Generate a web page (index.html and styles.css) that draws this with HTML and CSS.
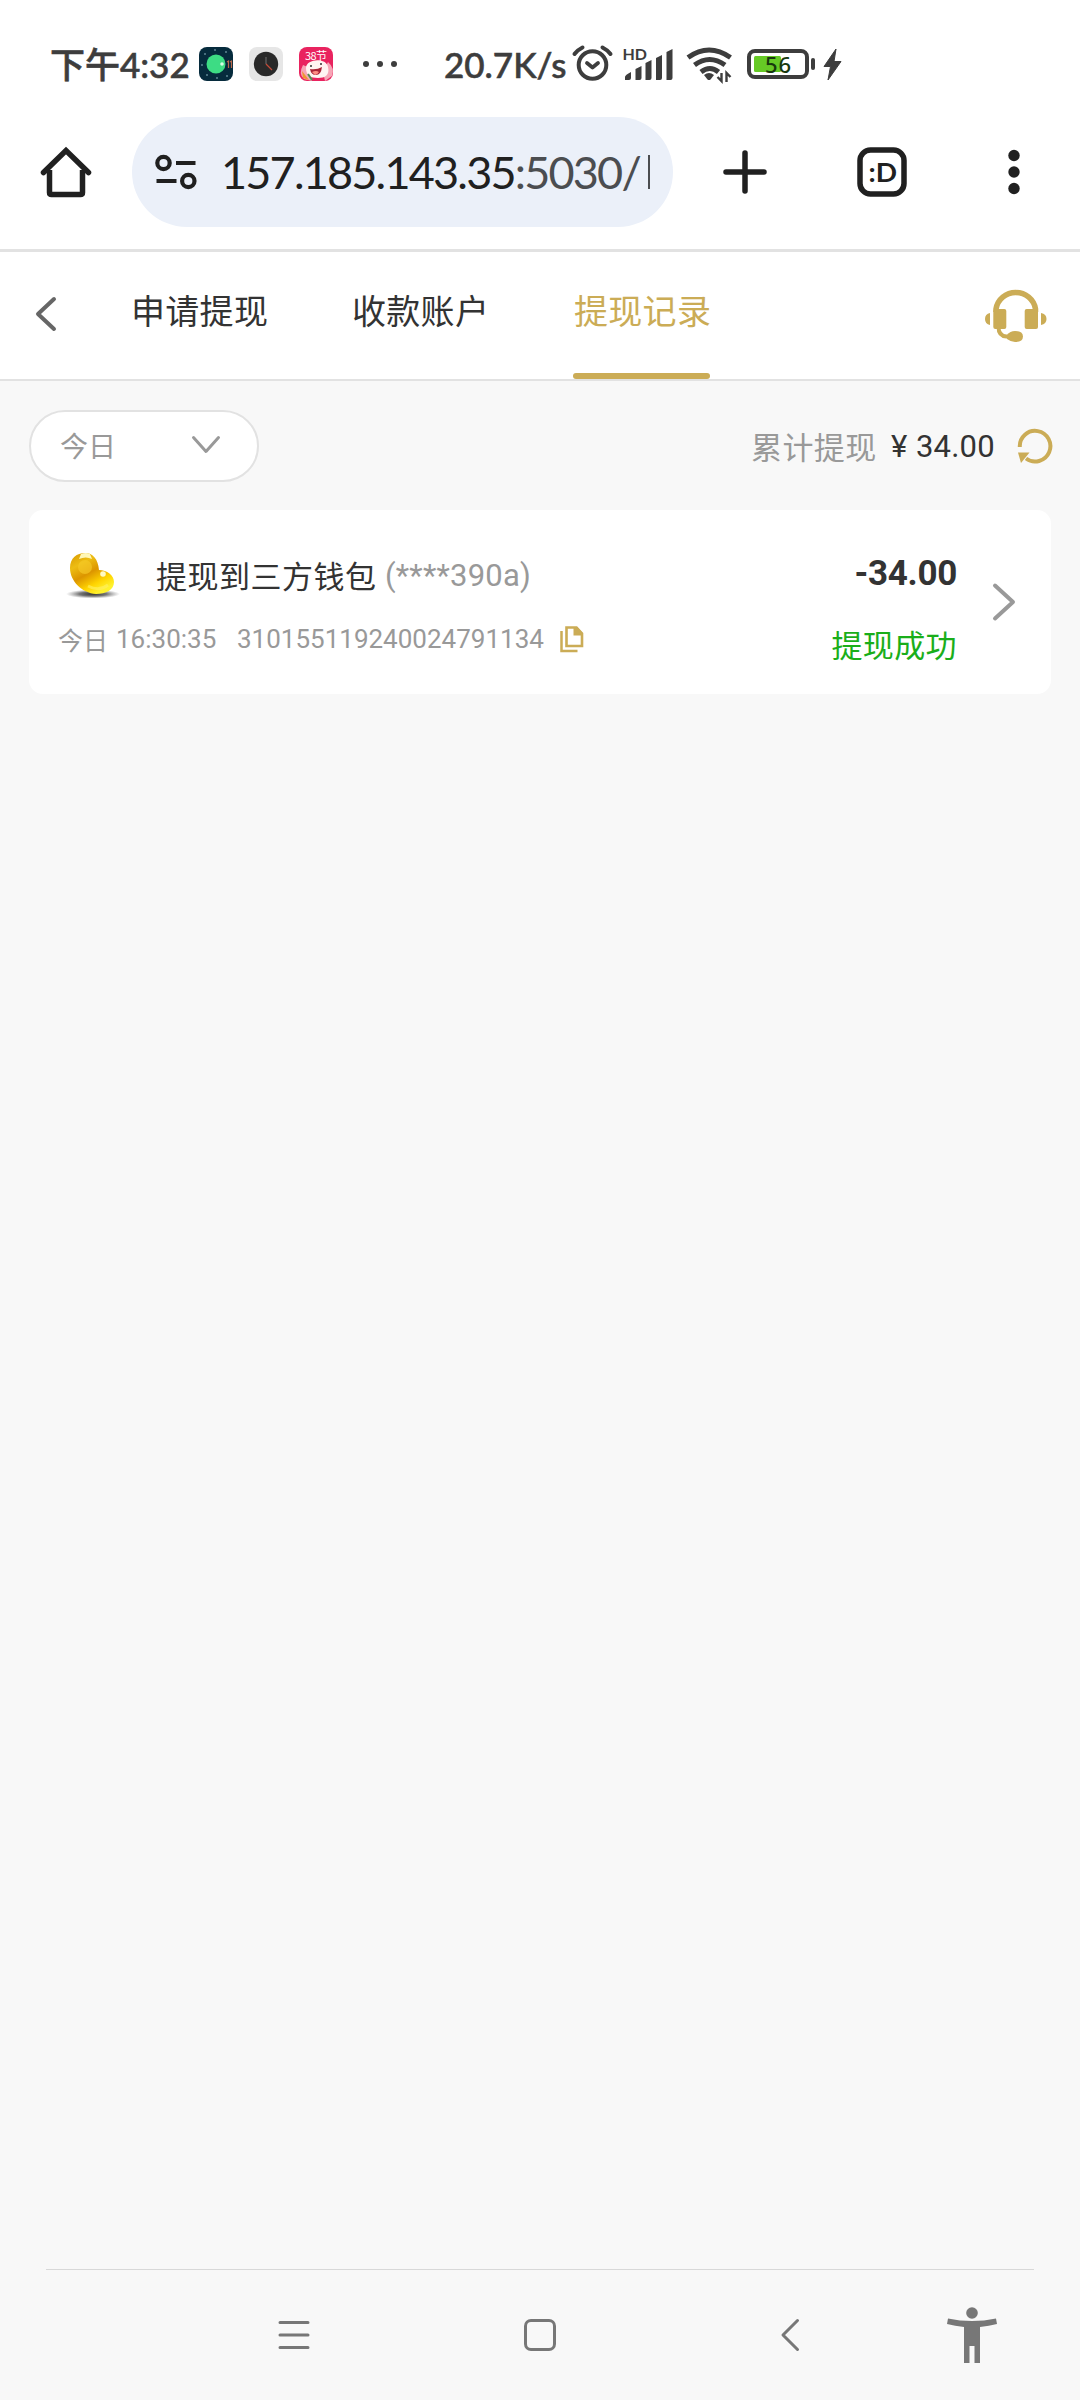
FILE: index.html
```html
<!DOCTYPE html>
<html lang="zh-CN">
<head>
<meta charset="utf-8">
<title>提现记录</title>
<link rel="stylesheet" href="styles.css">
</head>
<body>
<div class="status">
  <span class="time">下午4:32</span>
  <svg class="notices" width="200" height="36" viewBox="198 46 200 36">
    <rect x="199" y="47" width="34" height="34" rx="8" fill="#062b3d"/>
    <circle cx="216" cy="64" r="9.500" fill="#3ddc84"/><circle cx="222" cy="64" r="1.800" fill="#d5ffe5"/>
    <path d="M227 62l1.500-1v7M230 62l1.500-1v7" stroke="#b9694c" stroke-width="1.200" fill="none"/>
    <g fill="#9cc4cf"><circle cx="205" cy="54" r=".8"/><circle cx="215" cy="50" r=".8"/><circle cx="226" cy="52" r=".8"/><circle cx="202" cy="65" r=".8"/><circle cx="207" cy="75" r=".8"/><circle cx="217" cy="78" r=".8"/><circle cx="227" cy="76" r=".8"/></g>
    <rect x="249" y="47" width="34" height="34" rx="8" fill="#e6e6e6"/>
    <circle cx="266" cy="64" r="12.200" fill="#292929"/>
    <path d="M266 57v7" stroke="#666" stroke-width="1.200"/><path d="M266 64l6 6" stroke="#c34b38" stroke-width="1.200"/>
    <rect x="299" y="47" width="34" height="34" rx="8" fill="#e9235f"/>
    <path d="M303 65q-5 9 1 14l8 2-2-13zM328 62q7 6 4 14l-7 5-2-9z" fill="#f7a5b6"/>
    <path d="M306 68c0-9 20-11 22-1 2 8-3 11-10 11-8 0-12-3-12-10z" fill="#fff4f2"/>
    <path d="M310 69q7 1 12-2-1 8-6 8-5 0-6-6z" fill="#aa2436"/><path d="M312 72q4-2 7 0-2 3-4 3z" fill="#ff8d83"/>
    <circle cx="311" cy="66" r="1" fill="#333"/><circle cx="321" cy="64" r="1" fill="#333"/>
    <path d="M302 71l7 9-6-2z" fill="#ef9630"/><path d="M308 74l4 6" stroke="#4f8e52" stroke-width="2"/>
    <text x="305" y="60" class="fest" textLength="22">38节</text>
    <g fill="#3d3d3d"><circle cx="366" cy="64" r="3"/><circle cx="380" cy="64" r="3"/><circle cx="394" cy="64" r="3"/></g>
  </svg>
  <span class="speed">20.7K/s</span>
  <svg class="signals" width="276" height="42" viewBox="570 43 276 42" fill="none" stroke="#3d3d3d">
    <circle cx="592.500" cy="65" r="13.800" stroke-width="4"/>
    <path d="M574.500 54q3-4 8-6.500M610.500 54q-3-4-8-6.500" stroke-width="4" stroke-linecap="round"/>
    <path d="M587 63l5.500 4.500L598 63" stroke-width="3.800" stroke-linecap="round" stroke-linejoin="round"/>
    <text x="622.500" y="60" class="hd" textLength="24.500" lengthAdjust="spacingAndGlyphs">HD</text>
    <g fill="#3d3d3d" stroke="none"><path d="M625 77q0-2 6-5v6q0 2-2 2h-4zM635.500 69l6-3v12q0 2-2 2h-4zM645.500 63l6-3v18q0 2-2 2h-4zM656 58l6-3v23q0 2-2 2h-4zM666.500 52l6-3v29q0 2-2 2h-4z"/></g>
    <path d="M688 57.500q21-15 42.500 0M694.500 65q15-11 30.500 0M701 72q9-7 17.500 0" stroke-width="5"/>
    <path d="M704 75q5-4 10 0l-3.500 4.500q-1.500 1-3 0z" fill="#3d3d3d" stroke="none"/>
    <path d="M721.500 73v8l-4-4M726.500 82v-9l4 4" stroke-width="2.400"/>
    <rect x="749" y="51" width="58" height="26" rx="6" stroke-width="4"/>
    <rect x="754" y="56" width="27" height="16" rx="1.500" fill="#66ca25" stroke="none"/>
    <path d="M813 60v8" stroke-width="4" stroke-linecap="round"/>
    <text x="765" y="73" class="pct" textLength="26">56</text>
    <path d="M836 49l-12 17.500h6.500l-2.500 13.500 13-18.500h-7z" fill="#3d3d3d" stroke="#3d3d3d"/>
  </svg>
</div>

<div class="browser">
  <svg class="home" width="52" height="52" viewBox="40 146 52 52" fill="none" stroke="#202020" stroke-width="5.500"><path d="M49.500 170v22.500q0 2 2 2h29q2 0 2-2V170" /><path d="M43.500 172.500L66 150.500l22.500 22" stroke-linecap="round" stroke-linejoin="miter"/></svg>
  <div class="address">
    <svg width="44" height="36" viewBox="154 154 44 36" fill="none" stroke="#202020" stroke-width="4.200"><circle cx="163.500" cy="163" r="6.200"/><path d="M176 163h19.500M156.500 181h20"/><circle cx="188.300" cy="181" r="6.200"/></svg>
    <span class="url">157.185.143.35<span class="port">:5030/</span></span>
    <span class="cut"></span>
  </div>
  <svg class="tools" width="310" height="52" viewBox="720 146 310 52" fill="none" stroke="#202020" stroke-width="5.500">
    <path d="M745 153v38M726 172h38" stroke-linecap="round"/>
    <rect x="860" y="150" width="44" height="44" rx="10.500"/>
    <text x="868.500" y="182" class="tabs-count" textLength="28.500" lengthAdjust="spacingAndGlyphs">:D</text>
    <g fill="#202020" stroke="none"><circle cx="1014" cy="155.500" r="5.700"/><circle cx="1014" cy="172" r="5.700"/><circle cx="1014" cy="188.500" r="5.700"/></g>
  </svg>
</div>

<div class="header">
  <svg class="back" width="24" height="38" viewBox="0 0 24 38"><path d="M20 4L4 19l16 15" fill="none" stroke="#666" stroke-width="4" stroke-linecap="round" stroke-linejoin="round"/></svg>
  <div class="tabs"><span class="tab">申请提现</span><span class="tab">收款账户</span><span class="tab active">提现记录</span></div>
  <svg class="support" width="62" height="56" viewBox="985 287 62 56" fill="#cbac56">
    <path d="M996 312v-3a20 19.500 0 0 1 39.500 0v3" fill="none" stroke="#cbac56" stroke-width="5.500"/>
    <rect x="993.300" y="309" width="13" height="20" rx="2"/><rect x="1024.700" y="309" width="13.300" height="20" rx="2"/>
    <path d="M990 313v12q-5-1-5-6t5-6zM1041 313v12q5.500-1 5.500-6t-5.500-6z"/>
    <path d="M998.500 327q0 9 8 9.500h8" fill="none" stroke="#cbac56" stroke-width="4"/><path d="M1007 335q3-4 8-4 8 0 8 5.500t-8 5.500q-4 0-8-3z"/>
  </svg>
</div>

<div class="filter">
  <div class="day"><span>今日</span><svg width="30" height="20" viewBox="0 0 30 20"><path d="M2.500 2.500L15 16.500l12.500-14" fill="none" stroke="#999" stroke-width="3" stroke-linecap="round" stroke-linejoin="round"/></svg></div>
  <div class="sum"><span class="label">累计提现</span><span class="yen">¥</span><span class="total">34.00</span>
  <svg width="36" height="36" viewBox="1017 427 36 36"><path d="M1019.800 446A15.300 15.300 0 1 1 1026 457.500" fill="none" stroke="#cbac56" stroke-width="4"/><path d="M1018 451.500h11.500l-8.500 10.500z" fill="#cbac56"/></svg></div>
</div>

<div class="card">
  <div class="details">
    <div class="title-row">
      <svg class="bean" width="54" height="52" viewBox="66 549 54 52">
        <defs>
          <linearGradient id="gold" x1="0" y1="0" x2=".6" y2="1"><stop offset="0" stop-color="#d79800"/><stop offset=".3" stop-color="#edbd13"/><stop offset=".55" stop-color="#dc9500"/><stop offset=".8" stop-color="#ffd400"/><stop offset="1" stop-color="#fff22e"/></linearGradient>
          <radialGradient id="ground"><stop offset="0" stop-color="#333"/><stop offset=".5" stop-color="#777"/><stop offset="1" stop-color="#999" stop-opacity="0"/></radialGradient>
        </defs>
        <ellipse cx="93" cy="593" rx="27" ry="4.500" fill="url(#ground)"/>
        <path d="M70 567C70 557 77 552 85 552c8 0 13 6 14 17 8 0 15 5 15 12 0 8-8 12-18 12C82 592 70 580 70 567z" fill="url(#gold)"/>
        <path d="M81 553q5-2 9 0l2 5q-6-3-13 0z" fill="#fff7b8"/><ellipse cx="85" cy="566" rx="7" ry="7" fill="#f6ca28" opacity=".65"/>
        <circle cx="103" cy="573" r="2.800" fill="#fffac3"/><path d="M88 585q11 6 20-1" fill="none" stroke="#fff067" stroke-width="3" opacity=".6"/>
      </svg>
      <span class="title">提现到三方钱包</span><span class="account">(****390a)</span>
    </div>
    <div class="meta"><span class="meta-day">今日</span><span class="clock">16:30:35</span><span class="order">310155119240024791134</span>
      <svg width="24" height="28" viewBox="560 626 24 28" fill="none" stroke="#cbac56"><path d="M561.500 632v20h16" stroke-width="2.500"/><path d="M566.500 628.500h10l5.500 6v12.500h-15.500z" stroke-width="2.600"/><path d="M573.500 628h3.500l6 6.500v2h-9.500z" fill="#cbac56" stroke="none"/></svg>
    </div>
  </div>
  <div class="result"><span class="amount">-34.00</span><span class="state">提现成功</span></div>
  <svg class="next" width="26" height="40" viewBox="0 0 26 40"><path d="M4 3.500L22 20 4 36.500" fill="none" stroke="#999" stroke-width="4" stroke-linecap="round" stroke-linejoin="round"/></svg>
</div>

<div class="nav">
  <svg width="988" height="60" viewBox="46 2305 988 60" fill="none" stroke="#777" stroke-width="3">
    <path d="M280 2322.500h28M280 2335h28M280 2347.500h28" stroke-linecap="round"/>
    <rect x="525.500" y="2320.500" width="29" height="29" rx="5.500"/>
    <path d="M797.500 2320.500L783 2335l14.500 14.500" stroke-linecap="round" stroke-linejoin="round"/>
    <g fill="#777" stroke="none"><circle cx="972" cy="2313" r="5.800"/><path d="M948 2318.500q24 5 48 0l1 5.500q-8 2-17 3v36h-5.500v-17h-5v17H964v-36q-9-1-17-3z"/></g>
  </svg>
</div>
</body>
</html>
```
FILE: styles.css
```css
* { box-sizing: border-box; }
body { margin: 0; width: 1080px; height: 2400px; display: flex; flex-direction: column; background: #f8f8f8; color: #333; font-family: Roboto, "Noto Sans CJK SC", sans-serif; white-space: nowrap; overflow: hidden; }
svg { display: block; flex: none; }
span { flex: none; }
.status { height: 110px; background: #fff; display: flex; align-items: flex-start; color: #3d3d3d; font: 500 35px/50px Lato, "Noto Sans CJK SC", sans-serif; padding: 39px 0 0 50px; -webkit-text-stroke: .6px #3d3d3d; }
.status svg { -webkit-text-stroke: 0; }
.time { width: 148px; }
.notices { margin-top: 7px; }
.speed { width: 125px; margin-left: 46px; }
.signals { margin: 4px 0 0 1px; }
.fest { font: 11px "Noto Sans CJK SC", sans-serif; fill: #fff; }
.hd { font: bold 16px Lato, sans-serif; fill: #3d3d3d; stroke: none; }
.pct { font: 500 22px "Noto Sans", sans-serif; fill: #17380d; stroke: none; }
.browser { height: 142px; background: #fff; border-bottom: 3px solid #e2e2e2; display: flex; align-items: flex-start; padding: 7px 0 0 40px; }
.home { margin-top: 29px; }
.address { width: 541px; height: 110px; margin-left: 40px; border-radius: 55px; background: #ebf0f9; display: flex; align-items: center; padding-left: 22px; }
.url { width: 427px; height: 60px; margin-left: 23px; font: 45px/60px Lato, sans-serif; letter-spacing: -1.8px; color: #202020; }
.port { color: #4b4d50; }
.cut { width: 2px; height: 34px; background: #4b4d50; }
.tools { margin: 29px 0 0 47px; }
.tabs-count { font: bold 27px Lato, sans-serif; fill: #202020; stroke: none; }
.header { height: 129px; background: #fff; border-bottom: 2px solid #e2e2e2; display: flex; align-items: flex-start; padding-left: 34px; }
.back { margin-top: 43px; }
.tabs { display: flex; gap: 84px; margin-left: 73px; }
.tab { width: 137px; height: 127px; font-size: 34px; line-height: 121px; letter-spacing: .3px; }
.active { color: #cbac56; position: relative; text-indent: 1px; }
.active::after { content: ""; position: absolute; left: 0; right: 0; bottom: 0; height: 6px; border-radius: 3px; background: #cbac56; }
.support { margin: 35px 0 0 275px; }
.filter { height: 129px; display: flex; justify-content: space-between; align-items: flex-start; padding: 29px 27px 0 29px; }
.day { width: 230px; height: 72px; background: #fff; border: 2px solid #e2e2e2; border-radius: 36px; display: flex; align-items: center; justify-content: space-between; padding: 0 36px 2px 29px; color: #999; font-size: 28px; }
.sum { height: 72px; display: flex; align-items: center; font-size: 31px; padding-bottom: 1px; }
.sum .label { width: 140px; color: #999; letter-spacing: .4px; }
.yen { width: 25px; padding-top: 1px; }
.total { width: 101px; padding-top: 1px; letter-spacing: .2px; }
.card { height: 184px; margin: 0 29px; border-radius: 14px; background: #fff; display: flex; align-items: flex-start; }
.details { width: 700px; padding: 37px 0 0 29px; }
.title-row { display: flex; align-items: center; height: 58px; font-size: 31px; }
.bean { margin-left: 8px; }
.title { margin: -4px 0 0 36px; width: 229px; letter-spacing: .5px; }
.account { color: #999; margin-top: -2px; letter-spacing: .2px; }
.meta { display: flex; align-items: center; height: 40px; margin-top: 14px; color: #999; font-size: 26px; }
.meta-day { width: 58px; font-size: 25px; }
.clock { width: 121px; }
.order { width: 323px; }
.result { width: 228px; padding-top: 39px; display: flex; flex-direction: column; align-items: flex-end; }
.amount { font-size: 35px; font-weight: 700; line-height: 50px; letter-spacing: -.3px; }
.state { color: #1aae1a; font-size: 31px; line-height: 46px; margin-top: 25px; letter-spacing: .4px; }
.next { margin: 72px 0 0 34px; }
.nav { margin: auto 46px 0; height: 131px; border-top: 1px solid #d8d8d8; padding-top: 35px; }
```
